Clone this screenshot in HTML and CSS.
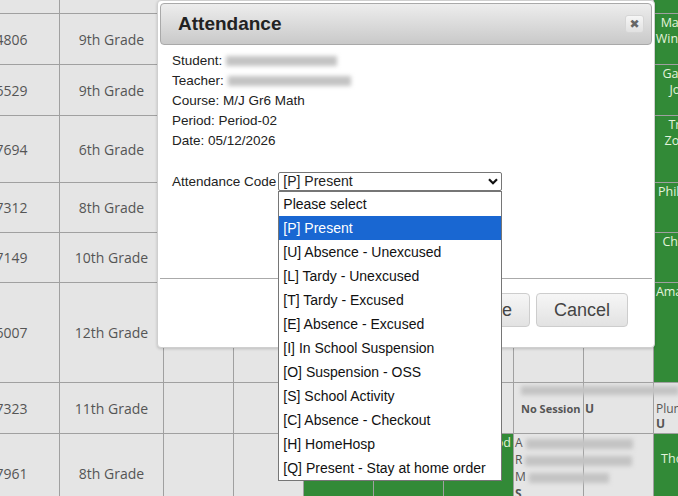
FILE: index.html
```html
<!DOCTYPE html>
<html>
<head>
    <meta charset="UTF-8">
    <meta name="viewport" content="width=device-width, initial-scale=1.0">
    <title>Attendance</title>
    <link rel="stylesheet" href="styles.css">
</head>
<body>
    <table class="grid">
        <colgroup>
            <col class="c-id"><col class="c-grade">
            <col class="c-day"><col class="c-day"><col class="c-day"><col class="c-day"><col class="c-day"><col class="c-day"><col class="c-day">
            <col class="c-day">
        </colgroup>
        <tr class="h43">
            <td></td><td></td><td></td><td></td><td></td><td></td><td></td><td></td><td></td>
            <td class="name"></td>
        </tr>
        <tr class="h51">
            <td>2014806</td><td>9th Grade</td><td></td><td></td><td></td><td></td><td></td><td></td><td></td>
            <td class="name">Marianne Winchester</td>
        </tr>
        <tr class="h51">
            <td>2016529</td><td>9th Grade</td><td></td><td></td><td></td><td></td><td></td><td></td><td></td>
            <td class="name">Gabriella Jordan</td>
        </tr>
        <tr class="h67">
            <td>2017694</td><td>6th Grade</td><td></td><td></td><td></td><td></td><td></td><td></td><td></td>
            <td class="name">Tristan Zoellner</td>
        </tr>
        <tr class="h50">
            <td>2017312</td><td>8th Grade</td><td></td><td></td><td></td><td></td><td></td><td></td><td></td>
            <td class="name">Philippson</td>
        </tr>
        <tr class="h50">
            <td>2017149</td><td>10th Grade</td><td></td><td></td><td></td><td></td><td></td><td></td><td></td>
            <td class="name">Christina</td>
        </tr>
        <tr class="h100">
            <td>2016007</td><td>12th Grade</td><td></td><td></td><td></td><td></td><td></td><td></td><td></td>
            <td class="name">Amarantha</td>
        </tr>
        <tr class="h51">
            <td>2017323</td><td>11th Grade</td><td></td><td></td><td></td><td></td><td></td>
            <td class="info"><div class="blur bar-wide"></div><b class="indent">No Session</b></td>
            <td class="info"><div class="spacer"></div><b>U</b></td>
            <td class="info pad2"><div class="spacer"></div><div>Plum</div><b>U</b></td>
        </tr>
        <tr class="h80">
            <td>2017961</td><td>8th Grade</td><td></td><td></td>
            <td class="green"></td><td class="green"></td>
            <td class="green tail">Attwood</td>
            <td class="info lines">
                <div>A<span class="blur w107"></span></div>
                <div>R<span class="blur w107"></span></div>
                <div>M<span class="blur w80"></span></div>
                <div><b>S</b></div>
            </td>
            <td></td>
            <td class="name">Jay Thomson</td>
        </tr>
    </table>

    <div class="dialog">
        <div class="titlebar">
            <span class="title">Attendance</span>
            <span class="close">&#10006;</span>
        </div>
        <div class="content">
            <div>Student: <span class="blur w111"></span></div>
            <div>Teacher: <span class="blur w123"></span></div>
            <div>Course: M/J Gr6 Math</div>
            <div>Period: Period-02</div>
            <div>Date: 05/12/2026</div>
            <div class="code-row">
                <span>Attendance Code</span>
                <div class="select">
                    <span>[P] Present</span>
                    <svg width="10" height="7" viewBox="0 0 10 7"><path d="M1 1.2 L5 5.2 L9 1.2" fill="none" stroke="#111" stroke-width="2.2"/></svg>
                    <div class="dropdown">
                        <div>Please select</div>
                        <div class="sel">[P] Present</div>
                        <div>[U] Absence - Unexcused</div>
                        <div>[L] Tardy - Unexcused</div>
                        <div>[T] Tardy - Excused</div>
                        <div>[E] Absence - Excused</div>
                        <div>[I] In School Suspension</div>
                        <div>[O] Suspension - OSS</div>
                        <div>[S] School Activity</div>
                        <div>[C] Absence - Checkout</div>
                        <div>[H] HomeHosp</div>
                        <div>[Q] Present - Stay at home order</div>
                    </div>
                </div>
            </div>
        </div>
        <div class="buttons">
            <button class="btn">Save</button>
            <button class="btn">Cancel</button>
        </div>
    </div>
</body>
</html>
```

FILE: styles.css
```css
body {
    margin: 0;
    width: 678px;
    height: 496px;
    overflow: hidden;
    position: relative;
    background: #e5e5e5;
    font-family: "Open Sans", sans-serif;
}
.grid {
    border-collapse: collapse;
    table-layout: fixed;
    width: 784px;
    margin: -30px 0 0 -61px;
    color: #555;
    font-size: 14px;
}
.c-id { width: 120px; }
.c-grade { width: 104px; }
.c-day { width: 70px; }
.grid td {
    border: 1px solid #a0a0a0;
    background: #e5e5e5;
    padding: 0;
    text-align: center;
    vertical-align: middle;
}
.h43 { height: 43px; }
.h50 { height: 50px; }
.h51 { height: 51px; }
.h67 { height: 67px; }
.h80 { height: 80px; }
.h100 { height: 100px; }
.grid td.name {
    background: #328a37;
    color: #e4f3dc;
    font-size: 12.5px;
    line-height: 16px;
    vertical-align: top;
    padding-top: 1px;
}
.grid td.green {
    background: #328a37;
}
.grid td.tail {
    color: #e4f3dc;
    font-size: 12.5px;
    line-height: 16px;
    text-align: right;
    vertical-align: top;
    padding: 1px 2px 0 0;
}
.grid td.info {
    text-align: left;
    vertical-align: top;
    font-size: 12px;
    line-height: 15px;
    color: #555;
    padding: 3px 0 0 1px;
    white-space: nowrap;
}
.grid td.pad2 { padding-left: 2px; }
.grid td.lines {
    line-height: 17px;
    padding-top: 0;
}
.indent {
    display: block;
    padding-left: 6px;
    font-size: 11px;
}
.spacer { height: 15px; }
.blur {
    background: #c3c3c3;
    filter: blur(2px);
}
.bar-wide {
    width: 158px;
    height: 9px;
    margin: 0 0 6px 6px;
}
.lines .blur {
    display: inline-block;
    height: 10px;
    margin-left: 3px;
    vertical-align: middle;
}
.w80 { width: 80px; }
.w107 { width: 107px; }
.w111 { width: 111px; }
.w123 { width: 123px; }

/* dialog */
.dialog {
    position: absolute;
    top: 0;
    left: 157px;
    width: 498px;
    box-sizing: border-box;
    padding: 2px;
    background: #fff;
    border: 1px solid #cfcfcf;
    border-radius: 4px;
    box-shadow: 0 1px 3px rgba(0, 0, 0, 0.18);
    font-family: "Liberation Sans", Arial, sans-serif;
    font-size: 13.5px;
    color: #222;
}
.titlebar {
    height: 42px;
    box-sizing: border-box;
    border: 1px solid #a9a9a9;
    border-radius: 4px;
    background: linear-gradient(#ededed, #c9c9c9);
    display: flex;
    align-items: center;
    justify-content: space-between;
    padding: 0 7px 0 17px;
}
.title {
    font-weight: bold;
    font-size: 19px;
    color: #222;
}
.close {
    width: 19px;
    height: 18px;
    box-sizing: border-box;
    border: 1px solid #d6d6d6;
    border-radius: 3px;
    background: linear-gradient(#f6f6f6, #e1e1e1);
    display: flex;
    align-items: center;
    justify-content: center;
    font-family: "DejaVu Sans", sans-serif;
    font-size: 12px;
    color: #666;
}
.content {
    height: 233px;
    box-sizing: border-box;
    padding: 6px 0 0 12px;
    line-height: 20px;
}
.content .blur {
    display: inline-block;
    height: 10px;
    vertical-align: middle;
}
.code-row {
    display: flex;
    align-items: center;
    gap: 2px;
    margin-top: 21px;
    line-height: 17px;
}
.select {
    position: relative;
    width: 224px;
    height: 19px;
    box-sizing: border-box;
    border: 1px solid #767676;
    border-radius: 2px;
    display: flex;
    align-items: center;
    justify-content: space-between;
    padding: 0 3px 0 4px;
    font-size: 14px;
}
.dropdown {
    position: absolute;
    top: 18px;
    left: -1px;
    width: 224px;
    box-sizing: border-box;
    border: 1px solid #767676;
    background: #fff;
    z-index: 2;
}
.dropdown div {
    height: 24px;
    line-height: 24px;
    padding-left: 4px;
    color: #111;
}
.dropdown .sel {
    background: #1967d2;
    color: #fff;
}
.buttons {
    border-top: 1px solid #aaa;
    display: flex;
    justify-content: flex-end;
    gap: 6px;
    padding: 14px 24px 18px;
}
.btn {
    height: 34px;
    padding: 0 17px;
    font-family: "Liberation Sans", Arial, sans-serif;
    font-size: 18px;
    color: #444;
    background: linear-gradient(#f6f6f6, #e2e2e2);
    border: 1px solid #cdcdcd;
    border-radius: 4px;
}
```
